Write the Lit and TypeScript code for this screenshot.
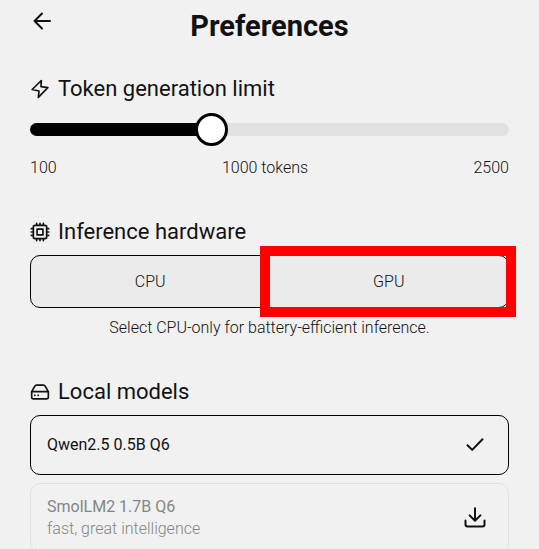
import { LitElement, html, svg, css, nothing } from "lit";
import { customElement, state } from "lit/decorators.js";
import { classMap } from "lit/directives/class-map.js";
import { styleMap } from "lit/directives/style-map.js";

interface Model {
  name: string;
  note?: string;
  installed: boolean;
}

const MODELS: Model[] = [
  { name: "Qwen2.5 0.5B Q6", installed: true },
  { name: "SmolLM2 1.7B Q6", note: "fast, great intelligence", installed: false },
];

const MIN_TOKENS = 100;
const MAX_TOKENS = 2500;

const ICONS = {
  back: svg`<path d="M20 12H4.5M12 4.5 4.5 12l7.5 7.5" />`,
  bolt: svg`<path d="M13.6 1.8 2.6 12.6 10.8 14.4 10 22 21.4 10.4 13.2 9.2Z" />`,
  chip: svg`<rect x="4" y="4" width="16" height="16" rx="2" /><rect x="8.5" y="8.5" width="7" height="7" />
    <path d="M8 1.5V4M12 1.5V4M16 1.5V4M8 20v2.5M12 20v2.5M16 20v2.5M1.5 8H4M1.5 12H4M1.5 16H4M20 8h2.5M20 12h2.5M20 16h2.5" />`,
  drive: svg`<path d="M2 11.6 5.6 5.2Q6.4 3.8 7.9 3.8H16.1Q17.6 3.8 18.4 5.2L22 11.6V18Q22 20.2 19.8 20.2H4.2Q2 20.2 2 18ZM2 11.6H22M5.6 16h.4M9.6 16h.4" />`,
  check: svg`<path d="M4.5 12.2 9.2 16.9 19.5 6.3" />`,
  download: svg`<path d="M12 2.2V14.4M6.6 9.4 12 14.8 17.4 9.4M2.5 14.6V18.6Q2.5 20.6 4.5 20.6H19.5Q21.5 20.6 21.5 18.6V14.6" />`,
};

const icon = (name: keyof typeof ICONS, size = "small") =>
  html`<svg class="icon ${size}" viewBox="0 0 24 24" aria-hidden="true">${ICONS[name]}</svg>`;

@customElement("app-root")
export class AppRoot extends LitElement {
  @state() private tokens = 990;
  @state() private hardware = "GPU";
  @state() private selected = MODELS[0].name;

  static styles = css`
    :host {
      display: block;
      height: 100vh;
      overflow-y: auto;
      scrollbar-width: none;
      background: #f1f1f1;
      color: #111;
      font: 300 16px/22px Roboto, sans-serif;
    }
    * {
      box-sizing: border-box;
    }
    button {
      font: inherit;
      color: inherit;
      cursor: pointer;
    }
    header {
      display: grid;
      grid-template-columns: 24px 1fr 24px;
      align-items: start;
      padding: 9px 30px 0;
    }
    h1 {
      margin: 0;
      font-size: 29px;
      line-height: 34px;
      font-weight: 700;
      text-align: center;
    }
    .plain {
      display: flex;
      padding: 0;
      border: 0;
      background: none;
    }
    main {
      display: flex;
      flex-direction: column;
      gap: 39px;
      padding: 32px 30px 24px;
    }
    section {
      display: flex;
      flex-direction: column;
    }
    h2 {
      display: flex;
      align-items: center;
      gap: 8px;
      margin: 0 0 9px;
      font-size: 22px;
      line-height: 28px;
      font-weight: 400;
    }
    .icon {
      flex: none;
      fill: none;
      stroke: #111;
      stroke-width: 2;
      stroke-linecap: round;
      stroke-linejoin: round;
    }
    .small {
      width: 20px;
      height: 20px;
    }
    .large {
      width: 24px;
      height: 24px;
    }
    .slider {
      appearance: none;
      width: 100%;
      height: 34px;
      margin: 0;
      background: none;
    }
    .slider::-webkit-slider-runnable-track {
      height: 13px;
      border-radius: 7px;
      background: linear-gradient(#000, #000) no-repeat left / var(--fill) 100%, #e1e1e1;
    }
    .slider::-webkit-slider-thumb {
      appearance: none;
      width: 33px;
      height: 33px;
      margin-top: -10px;
      border: 3px solid #000;
      border-radius: 50%;
      background: #fff;
    }
    .scale {
      display: flex;
      justify-content: space-between;
      margin-top: 11px;
    }
    .segments {
      position: relative;
      display: grid;
      grid-template-columns: 1fr 1fr;
      height: 53px;
      border: 1px solid #000;
      border-radius: 10px;
      background: #ebebeb;
    }
    .segment {
      border: 0;
      background: none;
    }
    .marker {
      position: absolute;
      inset: -10px -8px;
      left: calc(50% - 10px);
      border: 10px solid #f00;
      pointer-events: none;
    }
    .hint {
      margin: 9px 0 0;
      text-align: center;
    }
    .models {
      display: grid;
      gap: 8px;
    }
    .model {
      display: flex;
      align-items: center;
      justify-content: space-between;
      padding: 10px 21px 10px 16px;
      border: 1px solid #e1e1e1;
      border-radius: 10px;
      background: none;
      text-align: left;
      min-height: 60px;
    }
    .pending {
      min-height: 70px;
    }
    .selected {
      border-color: #000;
    }
    .label {
      display: grid;
    }
    .name {
      font-weight: 400;
    }
    .pending .label {
      color: #858585;
    }
  `;

  render() {
    const fill = ((this.tokens - MIN_TOKENS) / (MAX_TOKENS - MIN_TOKENS)) * 100;
    const rounded = Math.round(this.tokens / 50) * 50;
    return html`
      <header>
        <button class="plain" aria-label="Back">${icon("back", "large")}</button>
        <h1>Preferences</h1>
      </header>
      <main>
        <section>
          <h2 id="limit">${icon("bolt")}Token generation limit</h2>
          <input
            class="slider"
            type="range"
            aria-labelledby="limit"
            min=${MIN_TOKENS}
            max=${MAX_TOKENS}
            .value=${String(this.tokens)}
            style=${styleMap({ "--fill": `${fill}%` })}
            @input=${(e: Event) => (this.tokens = Number((e.target as HTMLInputElement).value))}
          />
          <div class="scale">
            <span>${MIN_TOKENS}</span><span>${rounded} tokens</span><span>${MAX_TOKENS}</span>
          </div>
        </section>
        <section>
          <h2 id="hardware">${icon("chip")}Inference hardware</h2>
          <div class="segments" role="group" aria-labelledby="hardware">
            ${["CPU", "GPU"].map(
              (h) => html`<button
                class="segment"
                aria-pressed=${this.hardware === h}
                @click=${() => (this.hardware = h)}
              >${h}</button>`
            )}
            <span class="marker"></span>
          </div>
          <p class="hint">Select CPU-only for battery-efficient inference.</p>
        </section>
        <section>
          <h2>${icon("drive")}Local models</h2>
          <div class="models">
            ${MODELS.map(
              (m) => html`<button
                class=${classMap({ model: true, pending: !m.installed, selected: this.selected === m.name })}
                @click=${() => m.installed && (this.selected = m.name)}
              >
                <span class="label">
                  <span class="name">${m.name}</span>
                  ${m.note ? html`<span>${m.note}</span>` : nothing}
                </span>
                ${icon(m.installed ? "check" : "download", "large")}
              </button>`
            )}
          </div>
        </section>
      </main>
    `;
  }
}
